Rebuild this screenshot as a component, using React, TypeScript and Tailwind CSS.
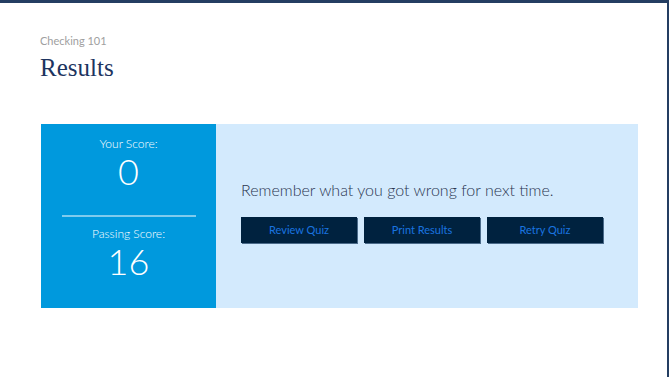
export default function App() {
  const buttons = ["Review Quiz", "Print Results", "Retry Quiz"];

  return (
    <div className="w-[669px] h-[377px] bg-white border-t-[3px] border-r-2 border-[#243e62] font-['Lato','Liberation_Sans',sans-serif] overflow-hidden">
      <div className="pl-[40px] pr-[29px] pt-[31px]">
        <p className="text-[11px] leading-[14px] text-[#a0a0a0]">Checking 101</p>
        <h1 className="mt-[5px] text-[25px] leading-[30px] text-[#1d3460] font-['Liberation_Serif','DejaVu_Serif',serif]">
          Results
        </h1>

        <div className="mt-[41px] ml-px flex h-[184px] w-[597px]">
          {/* Score column */}
          <div className="w-[175px] bg-[#0099dd] text-white flex flex-col items-center pt-[12px]">
            <p className="text-[12px] leading-[15px] font-light">Your Score:</p>
            <p className="text-[36px] leading-[40px] font-light">0</p>
            <div className="mt-[24px] mb-[9px] h-[2px] w-[134px] bg-[#7fcbed]" />
            <p className="text-[12px] leading-[15px] font-light">Passing Score:</p>
            <p className="text-[36px] leading-[40px] font-light">16</p>
          </div>

          {/* Message + actions */}
          <div className="flex-1 bg-[#d3eafd] pl-[25px] pt-[55px]">
            <p className="text-[16px] leading-[22px] font-light text-[#2a3550]">
              Remember what you got wrong for next time.
            </p>
            <div className="mt-[16px] flex gap-[7px]">
              {buttons.map((b) => (
                <button
                  key={b}
                  className="w-[116px] h-[26px] bg-[#00223f] text-[#1a74e0] text-[11px] shadow-[1px_1px_0_#4b6b8a]"
                >
                  {b}
                </button>
              ))}
            </div>
          </div>
        </div>
      </div>
    </div>
  );
}
